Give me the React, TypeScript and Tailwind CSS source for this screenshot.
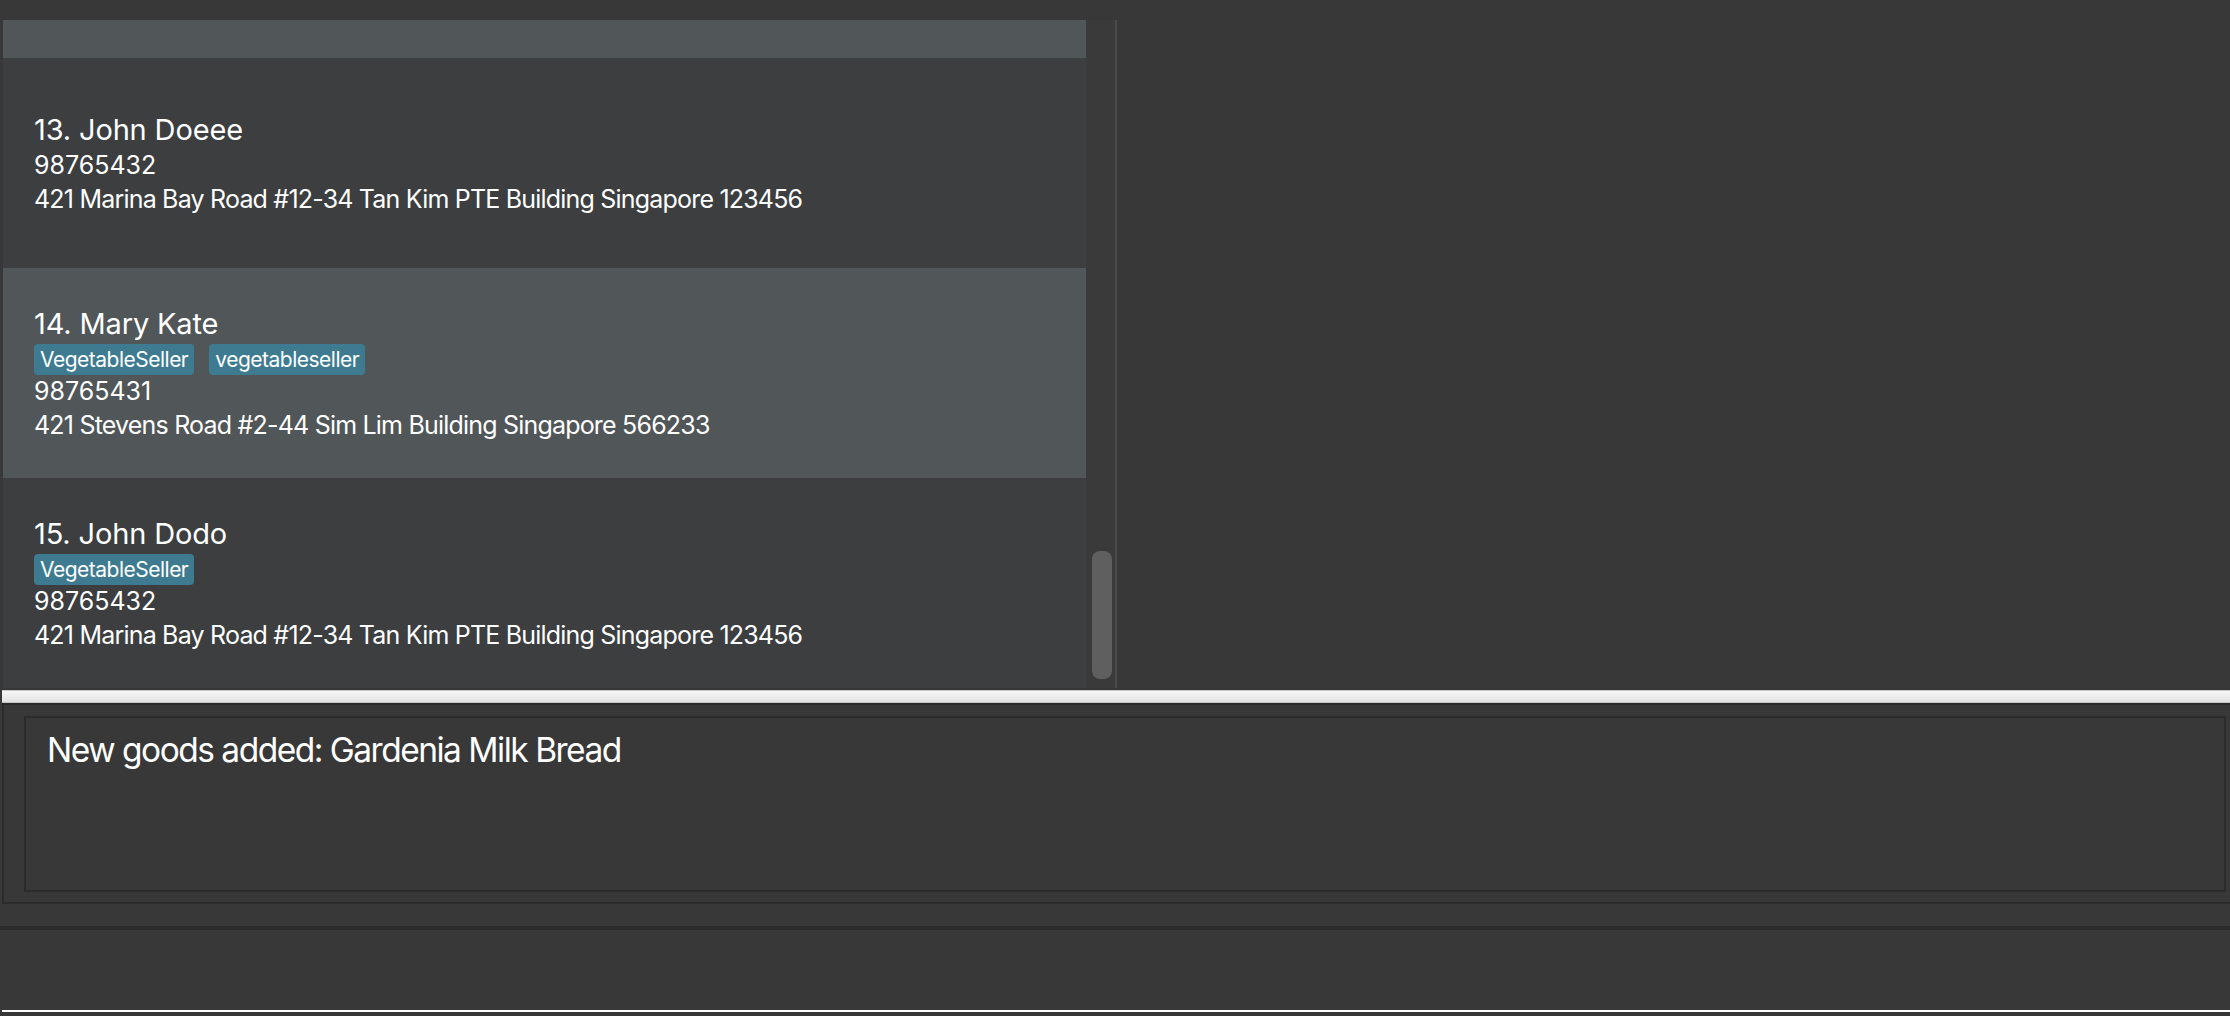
import React from "react";

type Person = { idx: number; name: string; tags: string[]; phone: string; address: string; odd: boolean };

const people: Person[] = [
  { idx: 13, name: "John Doeee", tags: [], phone: "98765432", address: "421 Marina Bay Road #12-34 Tan Kim PTE Building Singapore 123456", odd: false },
  { idx: 14, name: "Mary Kate", tags: ["VegetableSeller", "vegetableseller"], phone: "98765431", address: "421 Stevens Road #2-44 Sim Lim Building Singapore 566233", odd: true },
  { idx: 15, name: "John Dodo", tags: ["VegetableSeller"], phone: "98765432", address: "421 Marina Bay Road #12-34 Tan Kim PTE Building Singapore 123456", odd: false },
];

function Cell({ p }: { p: Person }) {
  return (
    <div className={`h-[210px] shrink-0 flex flex-col justify-center pl-[31px] text-white ${p.odd ? "bg-[#515658]" : "bg-[#3c3e3f]"}`}>
      <div className="h-[38px] leading-[38px] text-[29px] tracking-[-0.15px] whitespace-nowrap">
        {p.idx}. {p.name}
      </div>
      {p.tags.length > 0 && (
        <div className="flex gap-[15px] mt-[1px] h-[31px]">
          {p.tags.map((t, i) => (
            <div key={i} className="h-[31px] leading-[31px] px-[6px] rounded-[4px] bg-[#3e7b91] text-[21px] tracking-[-0.5px] whitespace-nowrap">
              {t}
            </div>
          ))}
        </div>
      )}
      <div className="h-[33px] leading-[33px] text-[25px] tracking-[0px] whitespace-nowrap">{p.phone}</div>
      <div className="h-[34px] leading-[34px] text-[25px] tracking-[-0.8px] whitespace-nowrap">{p.address}</div>
    </div>
  );
}

export default function App() {
  return (
    <div
      className="w-[2230px] h-[1016px] bg-[#383838] flex flex-col overflow-hidden"
      style={{ fontFamily: "Inter, 'Noto Sans', sans-serif" }}
    >
      <div className="h-[20px] shrink-0" />
      <div className="h-[668px] shrink-0 flex pl-[3px]">
        <div className="w-[1083px] shrink-0 flex flex-col overflow-hidden">
          <div className="h-[38px] shrink-0 bg-[#515658]" />
          {people.map((p) => (
            <Cell key={p.idx} p={p} />
          ))}
        </div>
        <div className="w-[29px] shrink-0 bg-[#3a3a3a] flex flex-col pt-[531px] pl-[6px]">
          <div className="w-[20px] h-[128px] rounded-[8px] bg-[#5f5f5f]" />
        </div>
        <div className="w-[2px] shrink-0 bg-[#4a4a4a]" />
        <div className="flex-1" />
      </div>
      <div className="h-[2px] shrink-0" />
      <div className="h-[13px] shrink-0 ml-[2px] border-t border-b border-t-[#c9c9c9] border-b-[#c4c4c4] bg-gradient-to-b from-[#f7f7f7] to-[#e3e3e3]" />
      <div className="h-[201px] w-[2248px] shrink-0 ml-[2px] border-2 border-[#2b2b2b] pt-[11px] pl-[20px] pr-[22px] pb-[10px] flex">
        <div className="flex-1 border-2 border-[#2b2b2b] pl-[21px] pt-[11px]">
          <div className="text-[33.5px] leading-[42px] text-white tracking-[-1.5px] whitespace-nowrap">
            New goods added: Gardenia Milk Bread
          </div>
        </div>
      </div>
      <div className="h-[22px] shrink-0" />
      <div className="h-[4px] shrink-0 bg-[#2a2a2a]" />
      <div className="h-[80px] shrink-0" />
      <div className="h-[2px] shrink-0 ml-[2px] bg-white" />
      <div className="h-[4px] shrink-0" />
    </div>
  );
}
